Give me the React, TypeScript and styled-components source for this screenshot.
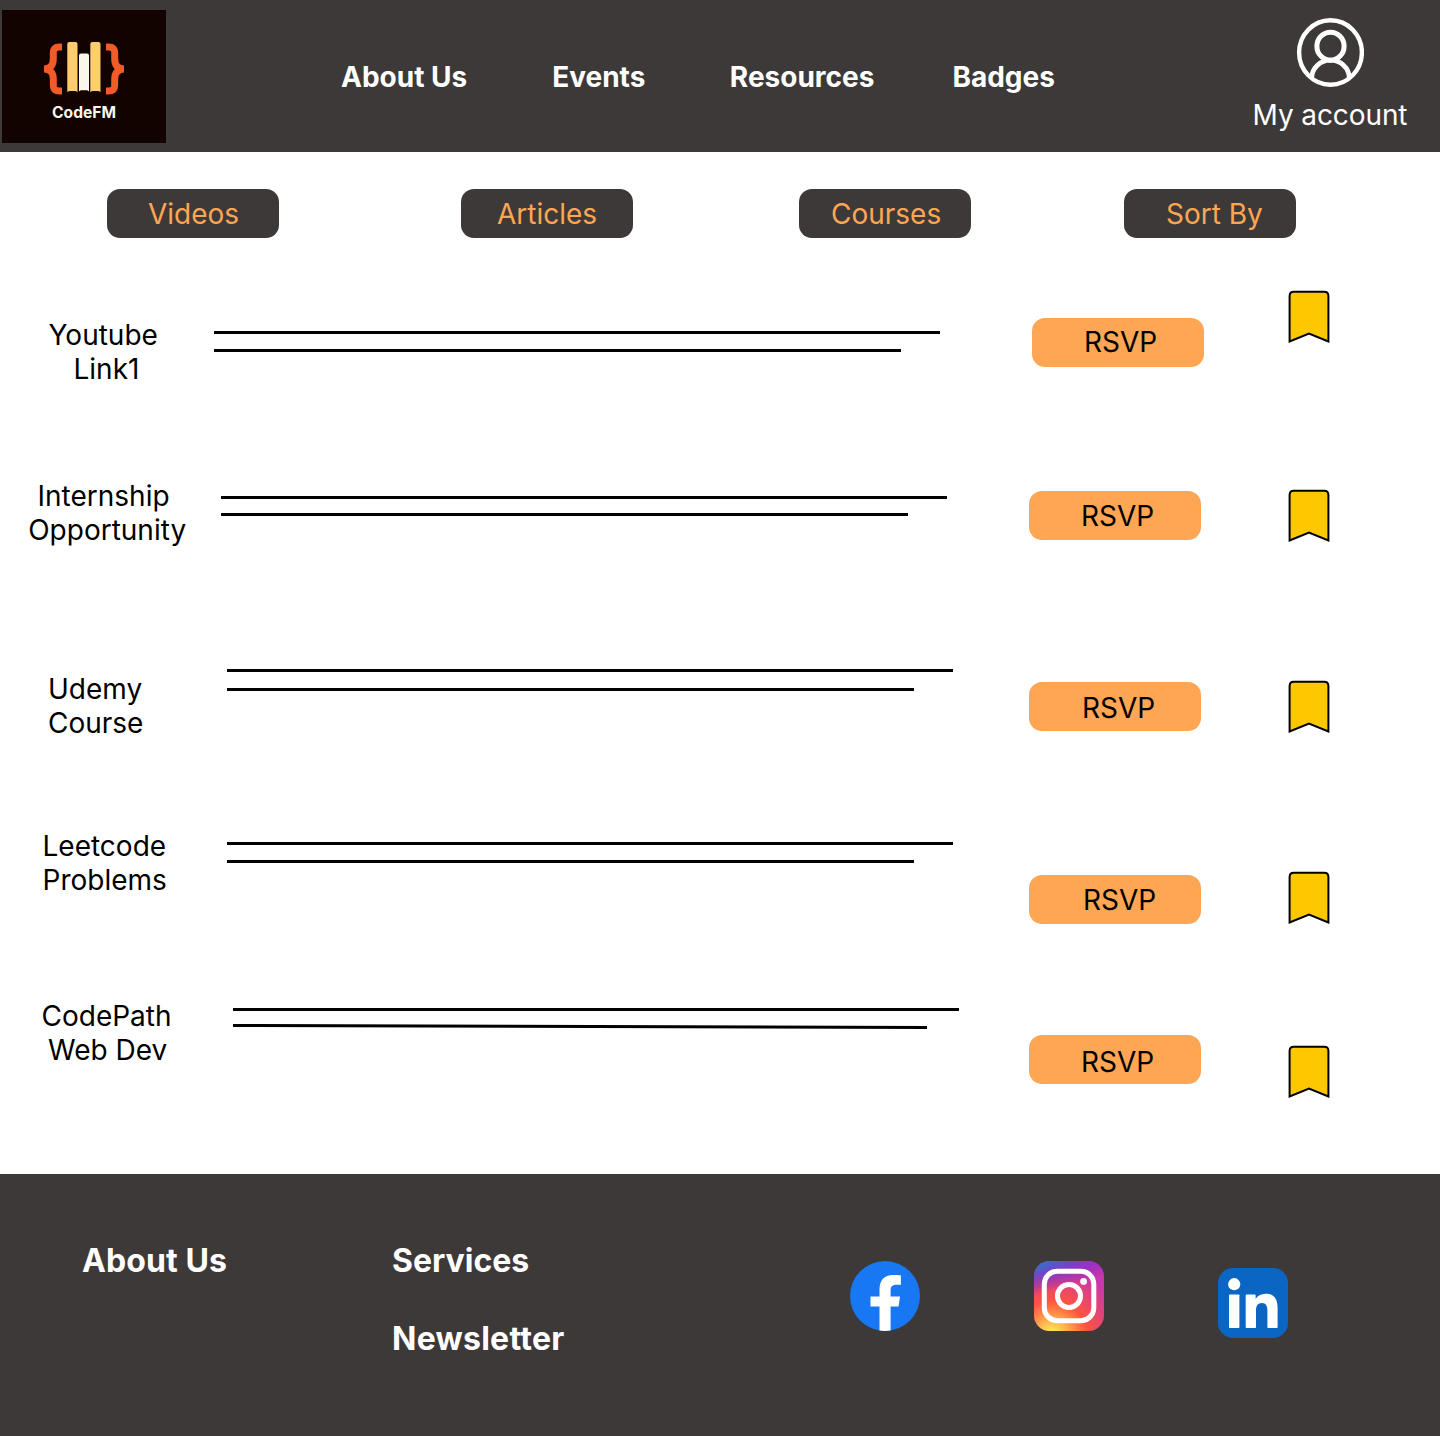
import React from "react";
import styled, { createGlobalStyle } from "styled-components";

const GlobalStyle = createGlobalStyle`
  * { box-sizing: border-box; }
  body { margin: 0; background: #fff; font-family: Inter, "Liberation Sans", sans-serif; }
  svg { display: block; flex: none; }
`;

const Page = styled.div`
  width: 1440px;
  height: 1436px;
  display: flex;
  flex-direction: column;
  background: #fff;
`;

const Header = styled.header`
  height: 152px;
  display: flex;
  align-items: flex-start;
  background: #3d3938;
  color: #fff;
`;

const Logo = styled.a`
  width: 164px;
  height: 133px;
  margin: 10px 0 0 2px;
  padding-top: 31px;
  display: flex;
  flex-direction: column;
  align-items: center;
  background: #120200;
`;

const LogoName = styled.span`
  margin-top: 8px;
  font-size: 15.6px;
  line-height: 18px;
  font-weight: 700;
  color: #f8f7ea;
  white-space: nowrap;
`;

const Nav = styled.nav`
  display: flex;
  width: 1086px;
  padding-top: 60px;
`;

const NavLink = styled.a<{ $gap: number }>`
  margin-left: ${(p) => p.$gap}px;
  font-size: 28px;
  line-height: 34px;
  font-weight: 700;
  white-space: nowrap;
`;

const Account = styled.a`
  width: 156px;
  padding-top: 17px;
  display: flex;
  flex-direction: column;
  align-items: center;
`;

const AccountLabel = styled.span`
  margin-top: 10px;
  font-size: 28px;
  line-height: 34px;
  font-weight: 400;
  letter-spacing: -0.1px;
  white-space: nowrap;
`;

const Main = styled.main`
  height: 1022px;
  display: flex;
  flex-direction: column;
`;

const Filters = styled.div`
  height: 128px;
  padding-top: 37px;
  display: flex;
`;

const Pill = styled.button<{ $gap: number; $inset: number; $drop: number; $dark?: boolean }>`
  flex: none;
  width: 172px;
  height: 49px;
  margin: 0 0 0 ${(p) => p.$gap}px;
  padding: ${(p) => p.$drop}px 0 0 ${(p) => p.$inset}px;
  display: flex;
  align-items: flex-start;
  border: 0;
  border-radius: 13px;
  background: ${(p) => (p.$dark ? "#3d3938" : "#ffa654")};
  color: ${(p) => (p.$dark ? "#ffa654" : "#000")};
  font-family: inherit;
  font-size: 28px;
  line-height: 34px;
  font-weight: 400;
  white-space: nowrap;
`;

const Row = styled.article<{ $height: number }>`
  height: ${(p) => p.$height}px;
  display: grid;
  grid-template-columns: 214px 815px 259px 152px;
  align-items: start;
`;

const Cell = styled.div<{ $top: number; $left?: number }>`
  padding-top: ${(p) => p.$top}px;
  padding-left: ${(p) => p.$left ?? 0}px;
`;

const Title = styled.div<{ $indent: number }>`
  padding-left: ${(p) => p.$indent}px;
  font-size: 28px;
  line-height: 34px;
  font-weight: 400;
  white-space: nowrap;
`;

const Rule = styled.div<{ $width: number; $space?: number; $tilt?: boolean }>`
  width: ${(p) => p.$width}px;
  height: 3px;
  margin-top: ${(p) => p.$space ?? 0}px;
  background: #000;
  transform: ${(p) => (p.$tilt ? "rotate(0.165deg)" : "none")};
`;

const Footer = styled.footer`
  height: 262px;
  display: flex;
  background: #3d3938;
  color: #fff;
`;

const FooterColumn = styled.div<{ $width: number; $left: number }>`
  width: ${(p) => p.$width}px;
  padding: 67px 0 0 ${(p) => p.$left}px;
  display: flex;
  flex-direction: column;
  gap: 39px;
`;

const FooterLink = styled.a<{ $spacing?: number }>`
  font-size: 32px;
  line-height: 39px;
  font-weight: 700;
  letter-spacing: ${(p) => p.$spacing ?? 0.1}px;
  white-space: nowrap;
`;

const Socials = styled.div`
  padding-top: 87px;
  display: flex;
  gap: 114px;
`;

const Lowered = styled.div`
  padding-top: 7px;
`;

const BooksLogo = () => (
  <svg width="82" height="55" viewBox="0 0 82 55">
    <g fill="none" stroke="#f15a29" strokeWidth="7">
      <path d="M19 6H16.500C12 6 10.300 8 10.300 12V18C10.300 24 7.500 28 1 28C7.500 28 10.300 32 10.300 38V44C10.300 48 12 50.100 16.500 50.100H19" />
      <path d="M63 6H65.500C70 6 71.700 8 71.700 12V18C71.700 24 74.500 28 81 28C74.500 28 71.700 32 71.700 38V44C71.700 48 70 50.100 65.500 50.100H63" />
    </g>
    <path d="M24.3 3Q24.3 1 26.3 1H32.5Q34.5 1 34.5 3V51.3Q33.5 50 32 50H27Q25.3 50 24.3 51.3Z" fill="#ffce6c" />
    <path d="M47.3 3Q47.3 1 49.3 1H55.5Q57.5 1 57.5 3V51.3Q56.5 50 55 50H50Q48.3 50 47.3 51.3Z" fill="#ffce6c" />
    <path d="M36 14.5Q36 12.5 38 12.5H44Q46 12.5 46 14.5V50.5Q45 49.2 43.5 49.2H38.5Q37 49.2 36 50.5Z" fill="#f8f7ea" />
  </svg>
);

const UserIcon = () => (
  <svg width="68" height="71" viewBox="0 0 68 71" fill="none" stroke="#fff">
    <ellipse cx="34.5" cy="35.5" rx="31.4" ry="32.3" strokeWidth="4.4" />
    <ellipse cx="34.5" cy="29.2" rx="13.6" ry="14" strokeWidth="5" />
    <path d="M15.7 61A18.8 17.8 0 0 1 53.3 61" strokeWidth="4.8" />
  </svg>
);

const BookmarkIcon = () => (
  <svg width="42" height="54" viewBox="0 0 42 54">
    <path d="M1.6 51.5V6Q1.6 1.8 5.8 1.8H36.2Q40.4 1.8 40.4 6V51.5L21 43.5Z" fill="#ffc700" stroke="#000" strokeWidth="2" />
  </svg>
);

const FacebookIcon = () => (
  <svg width="70" height="70" viewBox="0 0 70 70">
    <circle cx="35" cy="35" r="35" fill="#1877f2" />
    <path d="M29.5 69.6V45.5H20.5V35.5H29.5V29C29.5 19 34 13.9 43 13.9C46 13.9 49 14 50.9 14.3V23.8H46.5C42 23.8 40.6 26 40.6 29.5V35.5H50L48.6 45.5H40.6V69.6Q35 70.3 29.5 69.6Z" fill="#fff" />
  </svg>
);

const InstagramIcon = () => (
  <svg width="70" height="70" viewBox="0 0 70 70">
    <defs>
      <radialGradient id="warm" gradientUnits="userSpaceOnUse" cx="18" cy="75" r="70">
        <stop offset="0" stopColor="#ffdd55" />
        <stop offset=".1" stopColor="#ffdd55" />
        <stop offset=".5" stopColor="#ff543e" />
        <stop offset="1" stopColor="#c837ab" />
      </radialGradient>
      <radialGradient id="cool" gradientUnits="userSpaceOnUse" cx="0" cy="0" r="31" gradientTransform="translate(-11.7 5) rotate(78.7) scale(1 4.12)">
        <stop offset="0" stopColor="#3771c8" />
        <stop offset=".128" stopColor="#3771c8" />
        <stop offset="1" stopColor="#6600ff" stopOpacity="0" />
      </radialGradient>
    </defs>
    <rect width="70" height="70" rx="15.5" fill="url(#warm)" />
    <rect width="70" height="70" rx="15.5" fill="url(#cool)" />
    <g fill="none" stroke="#fff" strokeWidth="5">
      <rect x="10.3" y="10.2" width="49.5" height="49.5" rx="13" />
      <circle cx="35" cy="35" r="11.5" />
    </g>
    <circle cx="49.6" cy="20.4" r="3.4" fill="#fff" />
  </svg>
);

const LinkedInIcon = () => (
  <svg width="70" height="70" viewBox="0 0 70 70">
    <rect width="70" height="70" rx="15" fill="#0a66c2" />
    <g fill="#fff">
      <circle cx="16.2" cy="16.2" r="6.1" />
      <rect x="11" y="26.5" width="10.4" height="33.5" rx=".8" />
      <path d="M27.7 27.3Q27.7 26.5 28.5 26.5H36.8Q37.6 26.5 37.6 27.3V31C39.5 27.8 43 25.7 47.5 25.7C56.5 25.7 59.6 31.5 59.6 40V59.2Q59.6 60 58.8 60H50.2Q49.4 60 49.4 59.2V42.5C49.4 38 48 34.9 44 34.9C39.5 34.9 38 38 38 42.5V59.2Q38 60 37.2 60H28.5Q27.7 60 27.7 59.2Z" />
    </g>
  </svg>
);

type Resource = {
  height: number;
  title: [string, number][];
  titleTop: number;
  left: number;
  rulesTop: number;
  widths: [number, number];
  space: number;
  tilt?: boolean;
  buttonTop: number;
  buttonLeft: number;
  inset: number;
  drop: number;
  markTop: number;
};

const resources: Resource[] = [
  { height: 190, title: [["Youtube", 48.5], ["Link1", 73.5]], titleTop: 38, left: 0, rulesTop: 51, widths: [726, 687], space: 15, buttonTop: 38, buttonLeft: 3, inset: 52, drop: 7, markTop: 10 },
  { height: 190, title: [["Internship", 37.5], ["Opportunity", 28.2]], titleTop: 9, left: 7, rulesTop: 26, widths: [726, 687], space: 14, buttonTop: 21, buttonLeft: 0, inset: 52, drop: 8, markTop: 19 },
  { height: 160, title: [["Udemy", 48], ["Course", 48]], titleTop: 12, left: 13, rulesTop: 9, widths: [726, 687], space: 16, buttonTop: 22, buttonLeft: 0, inset: 53, drop: 9, markTop: 20 },
  { height: 170, title: [["Leetcode", 42.5], ["Problems", 42.5]], titleTop: 9, left: 13, rulesTop: 22, widths: [726, 687], space: 15, buttonTop: 55, buttonLeft: 0, inset: 54, drop: 8, markTop: 51 },
  { height: 184, title: [["CodePath", 41.5], ["Web Dev", 48]], titleTop: 9, left: 19, rulesTop: 18, widths: [726, 694], space: 14, tilt: true, buttonTop: 45, buttonLeft: 0, inset: 52, drop: 10, markTop: 55 },
];

export default function App() {
  return (
    <Page>
      <GlobalStyle />
      <Header>
        <Logo>
          <BooksLogo />
          <LogoName>CodeFM</LogoName>
        </Logo>
        <Nav>
          <NavLink $gap={175}>About Us</NavLink>
          <NavLink $gap={85}>Events</NavLink>
          <NavLink $gap={84.5}>Resources</NavLink>
          <NavLink $gap={78}>Badges</NavLink>
        </Nav>
        <Account>
          <UserIcon />
          <AccountLabel>My account</AccountLabel>
        </Account>
      </Header>
      <Main>
        <Filters>
          <Pill $dark $gap={107} $inset={41} $drop={8}>Videos</Pill>
          <Pill $dark $gap={182} $inset={36} $drop={8}>Articles</Pill>
          <Pill $dark $gap={166} $inset={32} $drop={8}>Courses</Pill>
          <Pill $dark $gap={153} $inset={42} $drop={8}>Sort By</Pill>
        </Filters>
        {resources.map((r) => (
          <Row key={r.title[0][0]} $height={r.height}>
            <Cell $top={r.titleTop}>
              {r.title.map(([line, indent]) => (
                <Title key={line} $indent={indent}>{line}</Title>
              ))}
            </Cell>
            <Cell $top={r.rulesTop} $left={r.left}>
              <Rule $width={r.widths[0]} />
              <Rule $width={r.widths[1]} $space={r.space} $tilt={r.tilt} />
            </Cell>
            <Cell $top={r.buttonTop} $left={r.buttonLeft}>
              <Pill $gap={0} $inset={r.inset} $drop={r.drop}>RSVP</Pill>
            </Cell>
            <Cell $top={r.markTop}>
              <BookmarkIcon />
            </Cell>
          </Row>
        ))}
      </Main>
      <Footer>
        <FooterColumn $width={391} $left={82}>
          <FooterLink>About Us</FooterLink>
        </FooterColumn>
        <FooterColumn $width={459} $left={1}>
          <FooterLink $spacing={0}>Services</FooterLink>
          <FooterLink $spacing={0.25}>Newsletter</FooterLink>
        </FooterColumn>
        <Socials>
          <FacebookIcon />
          <InstagramIcon />
          <Lowered>
            <LinkedInIcon />
          </Lowered>
        </Socials>
      </Footer>
    </Page>
  );
}
